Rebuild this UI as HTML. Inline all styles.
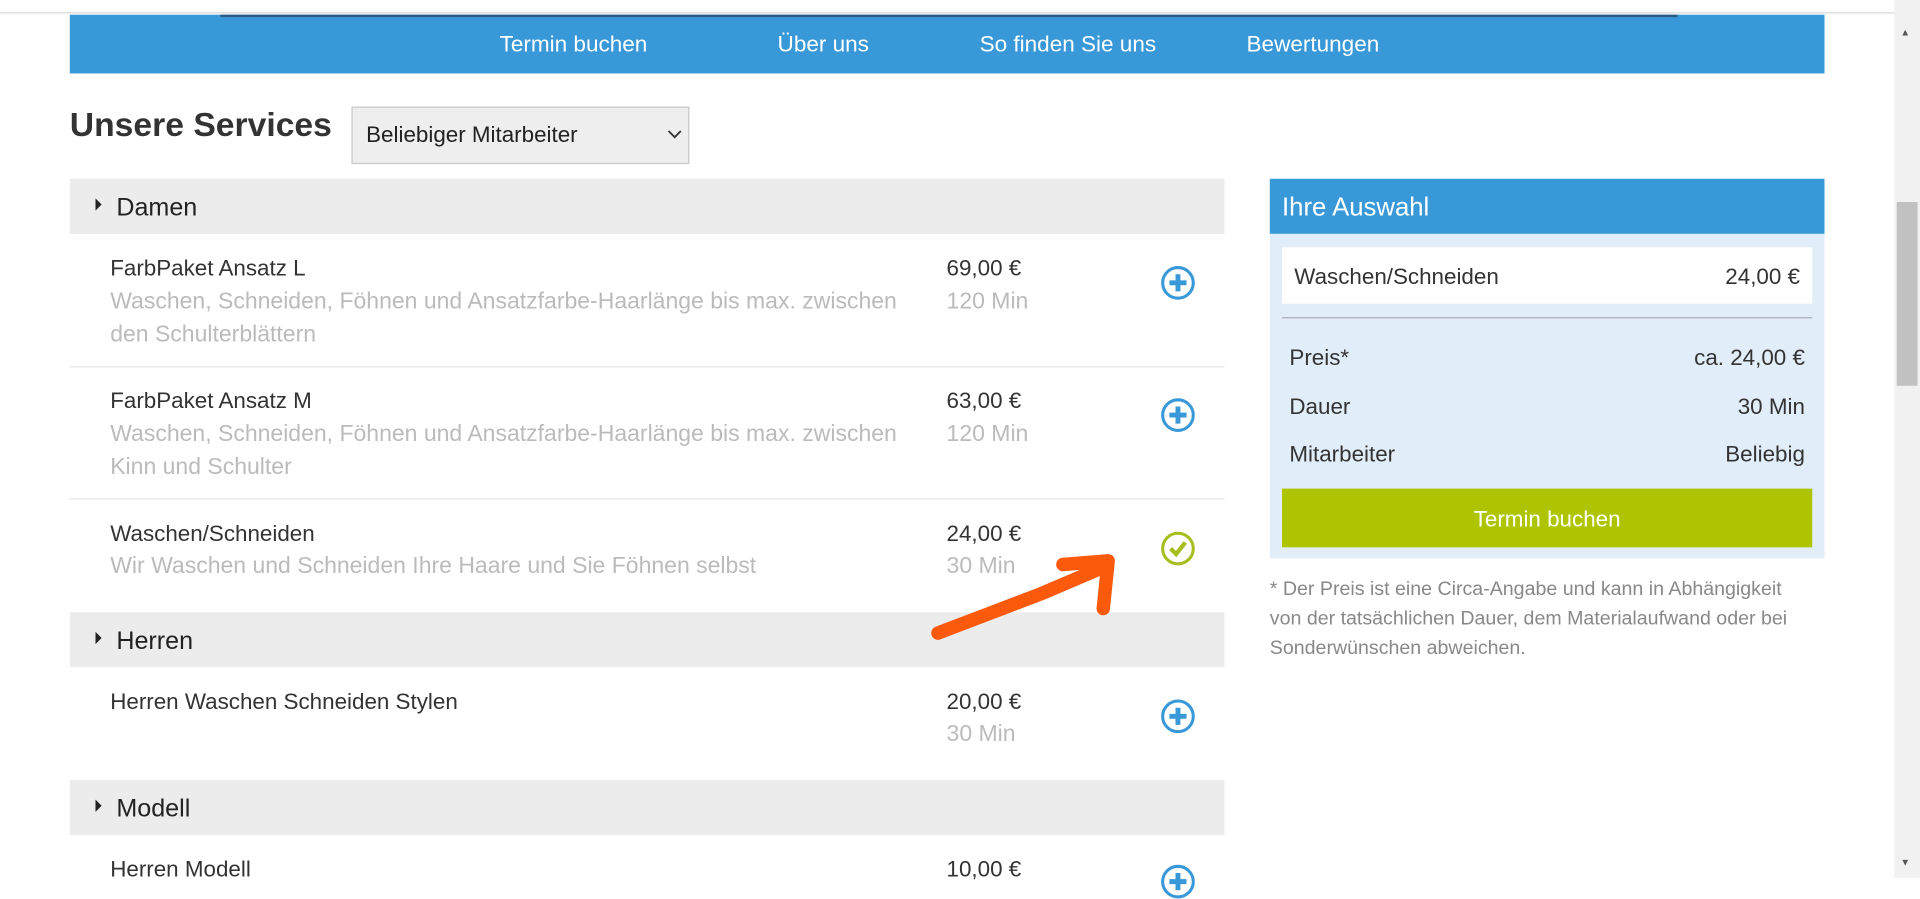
<!DOCTYPE html>
<html><head><meta charset="utf-8"><style>
html,body{margin:0;padding:0;width:1920px;height:878px;overflow:hidden;background:#fff;font-family:"Liberation Sans",Arial,sans-serif;}
#w{position:absolute;left:0;top:0;width:1568px;height:717px;transform:scale(1.22449);transform-origin:0 0;}
.a{position:absolute;white-space:nowrap;}
.nav{left:57px;top:12px;width:1433px;height:48px;background:#3898d8;}
.nt{color:#fff;font-size:18.4px;top:25px;}
.cat{position:absolute;left:57px;width:943px;height:45px;background:#ececec;}
.cat span{position:absolute;left:38px;top:12px;font-size:20.5px;color:#222;}
.cat i{position:absolute;left:21px;top:16px;width:0;height:0;border-top:5px solid transparent;border-bottom:5px solid transparent;border-left:5px solid #222;}
.n{font-size:18.3px;color:#333;}
.g{font-size:18.8px;color:#bbb;}
.sep{position:absolute;left:57px;width:943px;height:1px;background:#e6e6e6;}
.pl{position:absolute;width:28px;height:28px;}
.r{font-size:18.3px;color:#333;}
.fn{font-size:16px;color:#888;left:1037px;}
</style></head><body><div id="w">
<div class="a" style="left:0;top:10px;width:1547px;height:1px;background:#d8d8d8"></div>
<div class="a nav"></div>
<div class="a" style="left:180px;top:12px;width:1190px;height:2px;background:#2a5c86"></div>
<div class="a nt" style="left:408px">Termin buchen</div>
<div class="a nt" style="left:635px">Über uns</div>
<div class="a nt" style="left:800px">So finden Sie uns</div>
<div class="a nt" style="left:1018px">Bewertungen</div>
<div class="a" style="left:1547px;top:0;width:21px;height:717px;background:#f1f1f1"></div>
<div class="a" style="left:1549px;top:165px;width:17px;height:150px;background:#c1c1c1"></div>
<div class="a" style="left:1552px;top:22px;font-size:8px;color:#555">▲</div>
<div class="a" style="left:1552px;top:700px;font-size:8px;color:#555">▼</div>

<div class="a" style="left:57px;top:86px;font-size:27.5px;color:#333;font-weight:bold">Unsere Services</div>
<div class="a" style="left:287px;top:87px;width:274px;height:45px;background:#eee;border:1px solid #c8c8c8"></div>
<div class="a" style="left:299px;top:99px;font-size:18.3px;color:#222">Beliebiger Mitarbeiter</div>
<svg class="a" style="left:545px;top:105px" width="12" height="10"><path d="M1 2 L6 7 L11 2" fill="none" stroke="#333" stroke-width="1.5"/></svg>

<div class="cat" style="top:146px"><i></i><span>Damen</span></div>
<div class="a n" style="left:90px;top:208px">FarbPaket Ansatz L</div>
<div class="a g" style="left:90px;top:235px">Waschen, Schneiden, Föhnen und Ansatzfarbe-Haarlänge bis max. zwischen</div>
<div class="a g" style="left:90px;top:262px">den Schulterblättern</div>
<div class="a n" style="left:773px;top:208px">69,00 €</div>
<div class="a g" style="left:773px;top:235px">120 Min</div>
<svg class="pl" style="left:948px;top:217px" viewBox="0 0 28 28"><circle cx="14" cy="14" r="12.5" fill="none" stroke="#3898d8" stroke-width="2.5"/><path d="M14 7v14M7 14h14" stroke="#3898d8" stroke-width="4"/></svg>
<div class="sep" style="top:299px"></div>
<div class="a n" style="left:90px;top:316px">FarbPaket Ansatz M</div>
<div class="a g" style="left:90px;top:343px">Waschen, Schneiden, Föhnen und Ansatzfarbe-Haarlänge bis max. zwischen</div>
<div class="a g" style="left:90px;top:370px">Kinn und Schulter</div>
<div class="a n" style="left:773px;top:316px">63,00 €</div>
<div class="a g" style="left:773px;top:343px">120 Min</div>
<svg class="pl" style="left:948px;top:325px" viewBox="0 0 28 28"><circle cx="14" cy="14" r="12.5" fill="none" stroke="#3898d8" stroke-width="2.5"/><path d="M14 7v14M7 14h14" stroke="#3898d8" stroke-width="4"/></svg>
<div class="sep" style="top:407px"></div>
<div class="a n" style="left:90px;top:425px">Waschen/Schneiden</div>
<div class="a g" style="left:90px;top:451px">Wir Waschen und Schneiden Ihre Haare und Sie Föhnen selbst</div>
<div class="a n" style="left:773px;top:425px">24,00 €</div>
<div class="a g" style="left:773px;top:451px">30 Min</div>
<svg class="pl" style="left:948px;top:434px" viewBox="0 0 28 28"><circle cx="14" cy="14" r="12.5" fill="none" stroke="#a8be1e" stroke-width="2.5"/><path d="M8 14l4.5 4.5L20 9" fill="none" stroke="#a8be1e" stroke-width="3.5"/></svg>

<div class="cat" style="top:500px"><i></i><span>Herren</span></div>
<div class="a n" style="left:90px;top:562px">Herren Waschen Schneiden Stylen</div>
<div class="a n" style="left:773px;top:562px">20,00 €</div>
<div class="a g" style="left:773px;top:588px">30 Min</div>
<svg class="pl" style="left:948px;top:571px" viewBox="0 0 28 28"><circle cx="14" cy="14" r="12.5" fill="none" stroke="#3898d8" stroke-width="2.5"/><path d="M14 7v14M7 14h14" stroke="#3898d8" stroke-width="4"/></svg>
<div class="cat" style="top:637px"><i></i><span>Modell</span></div>
<div class="a n" style="left:90px;top:699px">Herren Modell</div>
<div class="a n" style="left:773px;top:699px">10,00 €</div>
<svg class="pl" style="left:948px;top:706px" viewBox="0 0 28 28"><circle cx="14" cy="14" r="12.5" fill="none" stroke="#3898d8" stroke-width="2.5"/><path d="M14 7v14M7 14h14" stroke="#3898d8" stroke-width="4"/></svg>

<div class="a" style="left:1037px;top:146px;width:453px;height:45px;background:#3898d8"></div>
<div class="a" style="left:1047px;top:158px;font-size:21px;color:#fff">Ihre Auswahl</div>
<div class="a" style="left:1037px;top:191px;width:453px;height:265px;background:#e1eef9"></div>
<div class="a" style="left:1047px;top:202px;width:433px;height:46px;background:#fff"></div>
<div class="a r" style="left:1057px;top:215px">Waschen/Schneiden</div>
<div class="a r" style="right:98px;top:215px">24,00 €</div>
<div class="a" style="left:1047px;top:259px;width:433px;height:1px;background:#aab"></div>
<div class="a r" style="left:1053px;top:281px">Preis*</div>
<div class="a r" style="right:94px;top:281px">ca. 24,00 €</div>
<div class="a r" style="left:1053px;top:321px">Dauer</div>
<div class="a r" style="right:94px;top:321px">30 Min</div>
<div class="a r" style="left:1053px;top:360px">Mitarbeiter</div>
<div class="a r" style="right:94px;top:360px">Beliebig</div>
<div class="a" style="left:1047px;top:399px;width:433px;height:48px;background:#afc400"></div>
<div class="a" style="left:1047px;top:413px;width:433px;text-align:center;font-size:18.3px;color:#fff">Termin buchen</div>
<div class="a fn" style="top:473px">* Der Preis ist eine Circa-Angabe und kann in Abhängigkeit</div>
<div class="a fn" style="top:497px">von der tatsächlichen Dauer, dem Materialaufwand oder bei</div>
<div class="a fn" style="top:521px">Sonderwünschen abweichen.</div>

<svg class="a" style="left:0;top:0" width="1000" height="600"><path d="M766 517 L850 485 L904 462 M868 461 L905 458 L901 497" fill="none" stroke="#fb5a0c" stroke-width="11" stroke-linecap="round" stroke-linejoin="round"/></svg>
</div></body></html>
